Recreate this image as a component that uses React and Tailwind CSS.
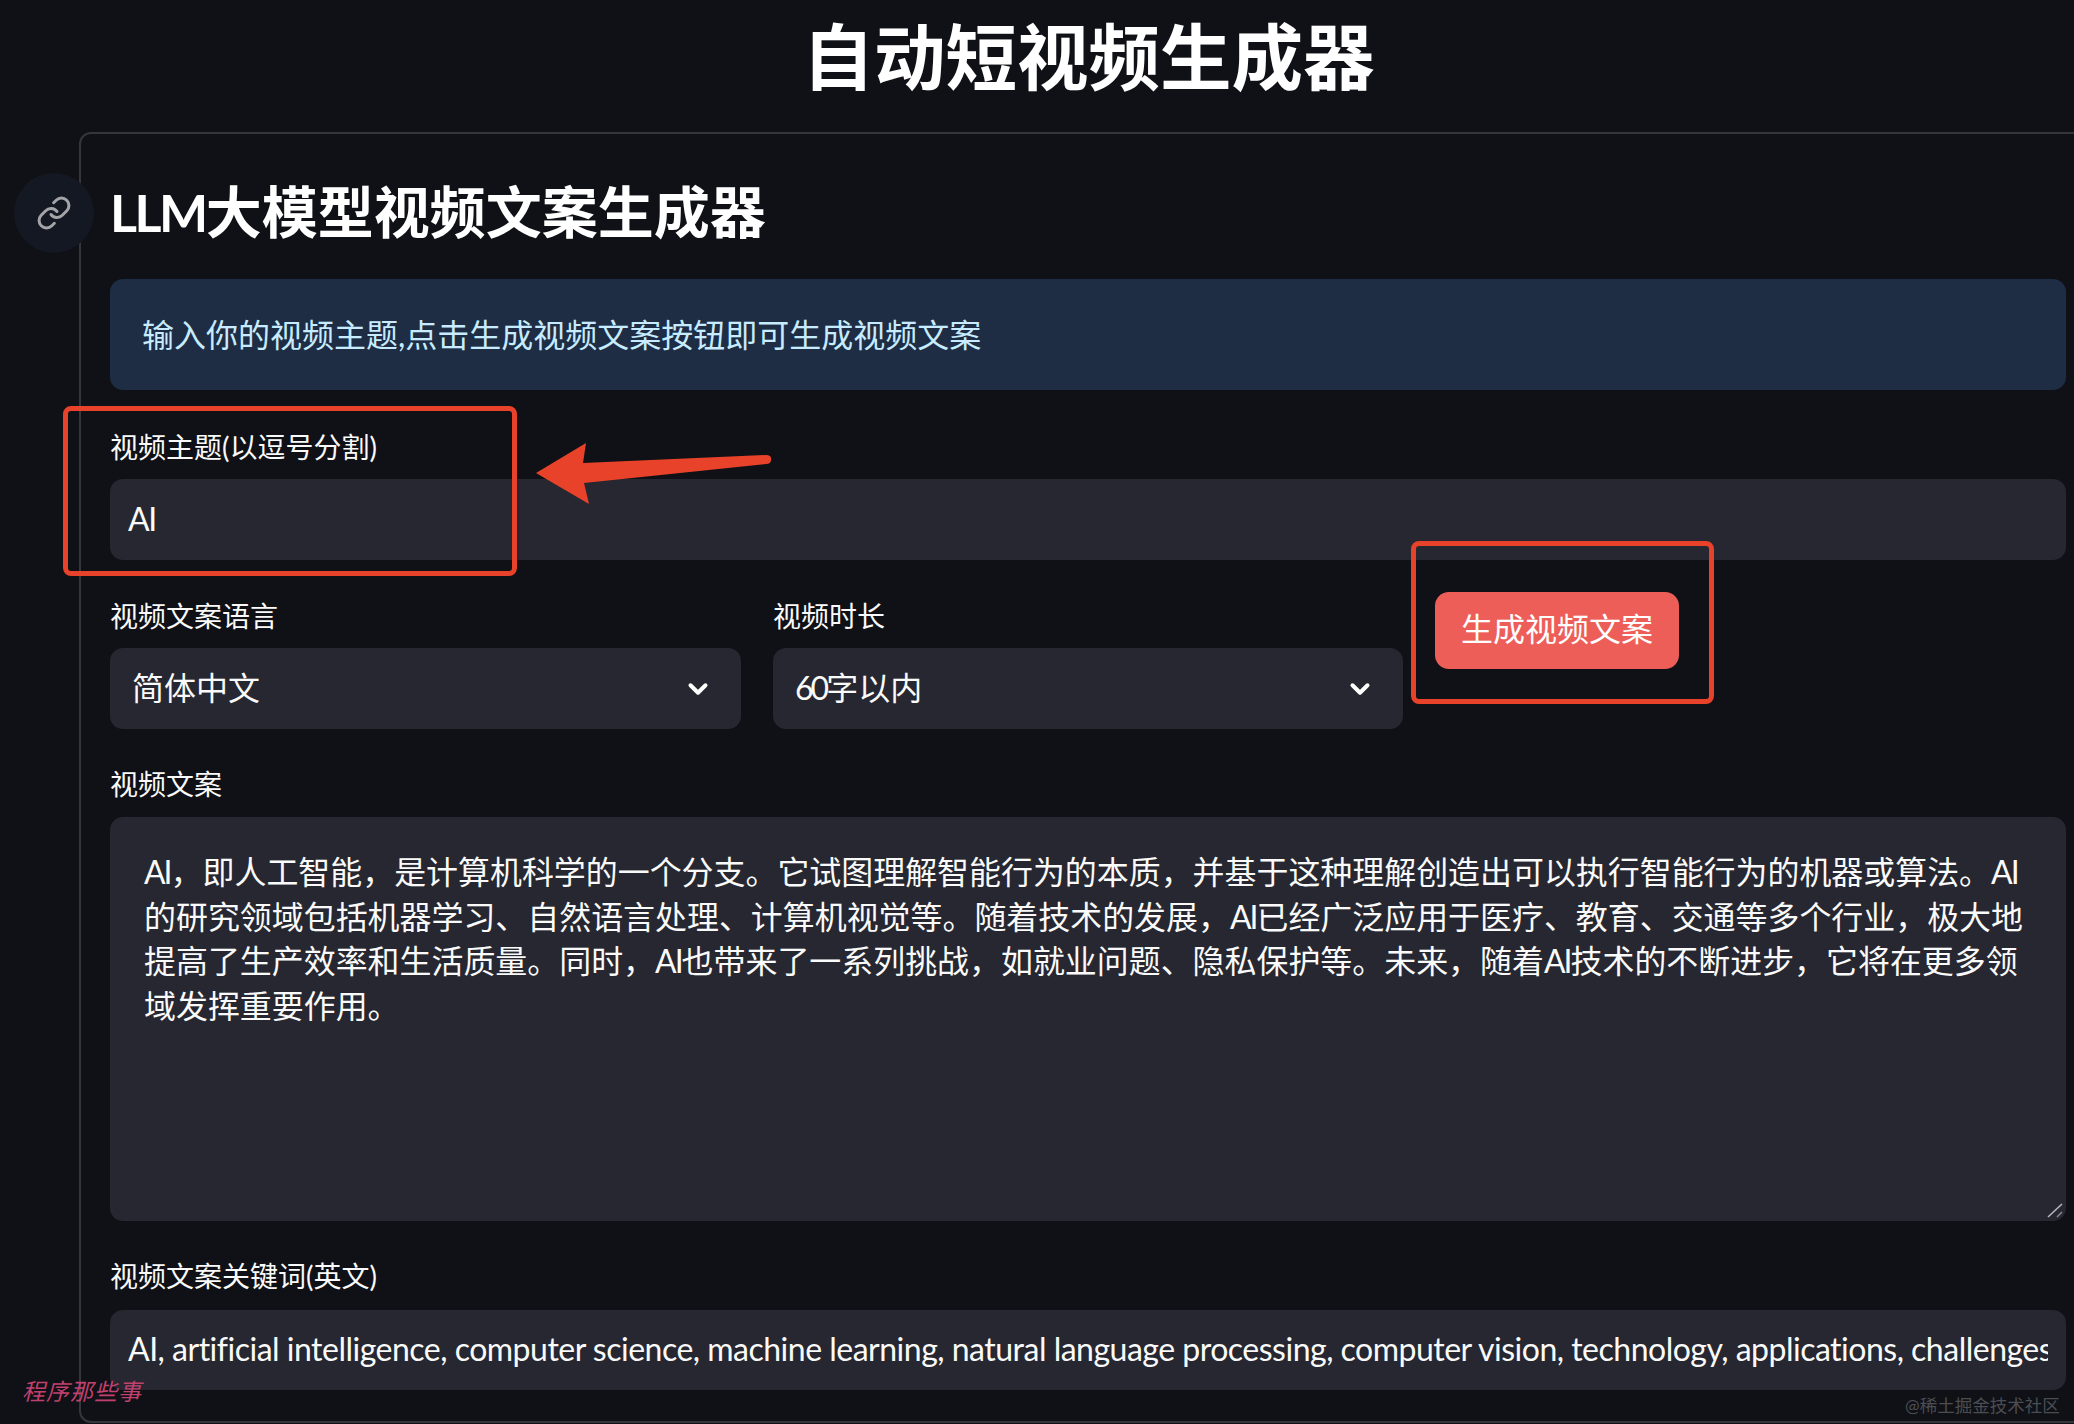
import React from 'react';
import { ChevronDown, Link } from 'lucide-react';

const FONT = 'Lato, "Noto Sans CJK SC", "Noto Sans", sans-serif';

const SCRIPT_LINES = [
  'AI，即人工智能，是计算机科学的一个分支。它试图理解智能行为的本质，并基于这种理解创造出可以执行智能行为的机器或算法。AI',
  '的研究领域包括机器学习、自然语言处理、计算机视觉等。随着技术的发展，AI已经广泛应用于医疗、教育、交通等多个行业，极大地',
  '提高了生产效率和生活质量。同时，AI也带来了一系列挑战，如就业问题、隐私保护等。未来，随着AI技术的不断进步，它将在更多领',
  '域发挥重要作用。',
];

const KEYWORDS =
  'AI, artificial intelligence, computer science, machine learning, natural language processing, computer vision, technology, applications, challenges, future';

// The Latin letters in the original are narrower than Lato, so pull "AI" in
const ScriptLine = ({ text }) => {
  const parts = text.split('AI');
  return (
    <div>
      {parts.map((part, i) => (
        <React.Fragment key={i}>
          {part}
          {i < parts.length - 1 && <span className="tracking-[-2px]">AI</span>}
        </React.Fragment>
      ))}
    </div>
  );
};

const FieldLabel = ({ children }) => (
  <div className="h-[40px] mb-[12px] flex items-center text-[28px] leading-[40px] text-[#fafafa]">{children}</div>
);

const SelectBox = ({ label, value, width }) => (
  <div className={width}>
    <FieldLabel>{label}</FieldLabel>
    <div className="h-[81px] rounded-[13px] bg-[#262730] pl-[22px] pr-[28px] flex items-center justify-between text-[32px] text-[#fafafa]">
      <span className="pb-[2px]">{value}</span>
      <ChevronDown size={30} strokeWidth={3.2} className="text-white" />
    </div>
  </div>
);

export default function App() {
  return (
    <div
      className="relative h-[1424px] w-[2074px] overflow-hidden bg-[#0f1116] text-[#fafafa]"
      style={{ fontFamily: FONT }}
    >
      <h1 className="h-[132px] pb-[18px] flex items-center justify-center pl-[103px] text-[71.5px] font-bold leading-none text-white">
        自动短视频生成器
      </h1>

      {/* Bordered form container, runs past the right edge of the window */}
      <div className="relative ml-[79px] w-[2100px] h-[1291px] rounded-[12px] border-2 border-[#34363c] pl-[29px] pt-[38px]">
        <div className="absolute left-[-67px] top-[39px] h-[80px] w-[80px] rounded-full bg-[#141822] flex items-center justify-center">
          <Link size={36} strokeWidth={2} className="text-[#a3a4a8]" />
        </div>

        <div className="w-[1956px]">
          <h2 className="h-[80px] mb-[27px] flex items-center text-[56px] font-bold leading-none text-white">
            <span className="text-[52px] tracking-[-2.5px]">LLM</span>
            <span>大模型视频文案生成器</span>
          </h2>

          <div className="h-[111px] rounded-[13px] bg-[#1e2d43] pl-[32px] flex items-center text-[32px] text-[#c7ebff]">
            输入你的视频主题,点击生成视频文案按钮即可生成视频文案
          </div>

          <div className="mt-[37px]">
            <FieldLabel>视频主题(以逗号分割)</FieldLabel>
            <input
              readOnly
              value="AI"
              className="block h-[81px] w-full rounded-[13px] bg-[#262730] px-[18px] pb-[2px] text-[32px] tracking-[-1.5px] text-[#fafafa] outline-none"
            />
          </div>

          <div className="mt-[36px] flex gap-[32px]">
            <SelectBox label="视频文案语言" value="简体中文" width="w-[631px]" />
            <SelectBox
              label="视频时长"
              value={
                <>
                  <span className="tracking-[-3px]">60</span>
                  <span>字以内</span>
                </>
              }
              width="w-[630px]"
            />
            <button className="-mt-[4px] h-[77px] w-[244px] rounded-[14px] bg-[#ed5e58] pb-[3px] text-[32px] text-white">
              生成视频文案
            </button>
          </div>

          <div className="mt-[35px]">
            <div className="h-[40px] mb-[13px] flex items-center text-[28px] leading-[40px] text-[#fafafa]">视频文案</div>
            <div className="relative h-[404px] rounded-[13px] bg-[#262730] px-[34px] pt-[33px] text-[31.95px] leading-[44.6px] text-[#fafafa] whitespace-pre">
              {SCRIPT_LINES.map((line) => (
                <ScriptLine key={line} text={line} />
              ))}
              {/* Resize grip */}
              <svg className="absolute right-[3px] bottom-[3px]" width="16" height="16" viewBox="0 0 16 16">
                <path d="M1 15 L15 2" stroke="#b4b5b8" strokeWidth="1.6" />
                <path d="M10 15 L15 10" stroke="#8c8d91" strokeWidth="1.4" />
              </svg>
            </div>
          </div>

          <div className="mt-[35px]">
            <div className="h-[40px] mb-[14px] flex items-center text-[28px] leading-[40px] text-[#fafafa]">视频文案关键词(英文)</div>
            <input
              readOnly
              value={KEYWORDS}
              className="block h-[80px] w-full rounded-[13px] bg-[#262730] px-[18px] pb-[3px] text-[32px] tracking-[-0.5px] text-[#fafafa] outline-none"
            />
          </div>
        </div>
      </div>

      {/* Red annotations drawn on top of the screenshot */}
      <div className="absolute left-[63px] top-[406px] h-[170px] w-[454px] rounded-[8px] border-[5px] border-[#e8432a]" />
      <div className="absolute left-[1411px] top-[541px] h-[163px] w-[303px] rounded-[8px] border-[5px] border-[#e8432a]" />
      <svg className="absolute left-[530px] top-[436px]" width="246" height="72" viewBox="0 0 246 72">
        <path
          d="M6 37 L56 7 L53 27 L236 19 Q242 19 241 24 Q241 28 236 28 L54 47 L59 68 Z"
          fill="#e8432a"
        />
      </svg>

      {/* Watermarks */}
      <div className="absolute left-[22px] top-[1376px] text-[23px] leading-[30px] tracking-[1px] italic text-[#c0406e]">程序那些事</div>
      <div className="absolute left-[1905px] top-[1394px] text-[17.5px] leading-[24px] text-[#4c4d53]">@稀土掘金技术社区</div>
    </div>
  );
}
